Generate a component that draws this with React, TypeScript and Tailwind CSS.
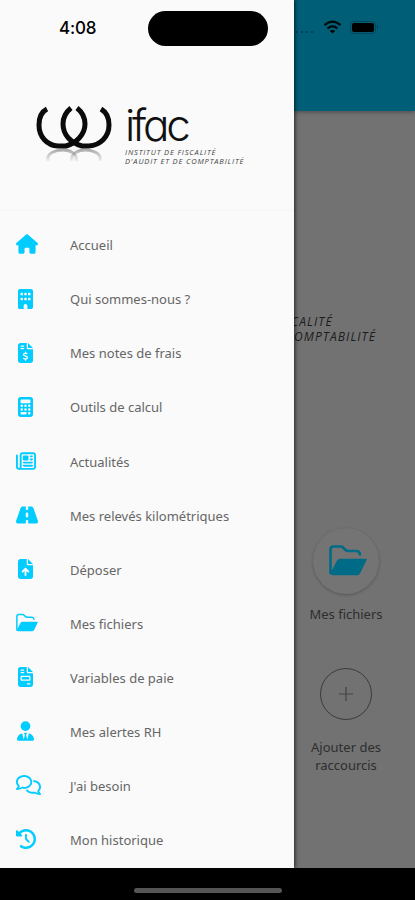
import type { ReactNode } from "react";
import type { IconType } from "react-icons";
import {
  FaBuilding,
  FaCalculator,
  FaClockRotateLeft,
  FaFileArrowUp,
  FaFileInvoice,
  FaFileInvoiceDollar,
  FaHouse,
  FaRegComments,
  FaRegNewspaper,
  FaRoad,
  FaUserTie,
} from "react-icons/fa6";

interface MenuEntry {
  label: string;
  Icon: IconType | typeof FolderIcon;
  size: string;
}

const MENU: MenuEntry[] = [
  { label: "Accueil", Icon: FaHouse, size: "w-[22px] h-[20px]" },
  { label: "Qui sommes-nous ?", Icon: FaBuilding, size: "ml-[2px] w-[15px] h-[20px]" },
  { label: "Mes notes de frais", Icon: FaFileInvoiceDollar, size: "ml-[2px] w-[15px] h-[20px]" },
  { label: "Outils de calcul", Icon: FaCalculator, size: "ml-[2px] w-[15px] h-[20px]" },
  { label: "Actualités", Icon: FaRegNewspaper, size: "w-[20px] h-[20px]" },
  { label: "Mes relevés kilométriques", Icon: FaRoad, size: "w-[22px] h-[20px]" },
  { label: "Déposer", Icon: FaFileArrowUp, size: "ml-[2px] w-[15px] h-[20px]" },
  { label: "Mes fichiers", Icon: FolderIcon, size: "w-[22px] h-[20px]" },
  { label: "Variables de paie", Icon: FaFileInvoice, size: "ml-[2px] w-[15px] h-[20px]" },
  { label: "Mes alertes RH", Icon: FaUserTie, size: "ml-[1px] w-[17px] h-[20px]" },
  { label: "J'ai besoin", Icon: FaRegComments, size: "w-[25px] h-[20px]" },
  { label: "Mon historique", Icon: FaClockRotateLeft, size: "w-[20px] h-[20px]" },
];

function FolderIcon({ className }: { className?: string }) {
  return (
    <svg viewBox="0 0 38 34" className={className} fill="none">
      <path
        d="M1.5 29V5.5q0-3 3-3h7q1.500 0 2.500 1l2.500 2.500q1 1 2.500 1h8.500q3 0 3.500 3.500"
        stroke="currentColor"
        strokeWidth="2.600"
        strokeLinecap="round"
      />
      <path
        d="M1.500 29 8 16.500q1-1.800 3-1.800h25.500q1.800 0 1 1.600L31.500 28.500q-1.300 2.800-4 2.800H4q-3 0-2.500-2.300Z"
        fill="currentColor"
      />
    </svg>
  );
}

function LogoMark() {
  return (
    <svg viewBox="0 0 76 60" className="h-[60px] w-[76px]" fill="none">
      <defs>
        <linearGradient id="fade" x1="0" y1="46" x2="0" y2="58" gradientUnits="userSpaceOnUse">
          <stop offset="0" stopColor="#777" stopOpacity="0.6" />
          <stop offset="1" stopColor="#999" stopOpacity="0.1" />
        </linearGradient>
      </defs>
      <g stroke="url(#fade)" strokeWidth="3">
        <path d="M12 57C10 49 20 46 27 46S42 50 40 57" />
        <path d="M36 57C34 50 42 46 49 46S66 49 64 57" />
      </g>
      <g stroke="#0b0b0b" strokeWidth="5">
        <path d="M11 5C5 8 3 14 3 21C3 33 11 41.500 22 42H30C40 39 49 31 49 20C49 13 46 8 41 4" />
        <path d="M35 4C30 8 27 13 27 20C27 31 35 39 46 42H53C64 41.500 73 33 73 21C73 14 70 8 65 5" />
      </g>
    </svg>
  );
}

function Drawer() {
  return (
    <aside className="relative z-10 flex h-[868px] w-[294px] shrink-0 flex-col overflow-hidden bg-[#fafafa] shadow-[1px_0_4px_rgba(0,0,0,0.7)]">
      <div className="flex h-[58px] items-center pl-[59px]">
        <span className="w-[89px] font-['Inter'] text-[17px] font-medium tracking-[-0.2px] text-black">
          4:08
        </span>
        <div className="h-[35px] w-[120px] rounded-full bg-black" />
      </div>
      <div className="flex h-[154px] items-start border-b border-[#f5f5f5] pl-[36px] pt-[46px]">
        <LogoMark />
        <div className="pl-[13px]">
          <div className="h-[44px] font-['Inter'] text-[44px] font-light leading-[43px] tracking-[-3.200px] text-[#111] [font-feature-settings:'cv11']">
            ifac
          </div>
          <div className="whitespace-nowrap font-['Open_Sans'] text-[7.500px] italic leading-[9px] tracking-[0.850px] text-[#444]">
            INSTITUT DE FISCALITÉ
            <br />
            D'AUDIT ET DE COMPTABILITÉ
          </div>
        </div>
      </div>
      <nav className="pt-[8px]">
        {MENU.map(({ label, Icon, size }) => (
          <div key={label} className="flex h-[54.100px] items-center pl-[16px]">
            <div className="flex w-[54px] pb-[3px] text-[#0cf]">
              <Icon className={size} />
            </div>
            <span className="whitespace-nowrap font-['Noto_Sans'] text-[13px] text-[#666]">
              {label}
            </span>
          </div>
        ))}
      </nav>
    </aside>
  );
}

function StatusIcons() {
  return (
    <div className="flex items-center pl-[2px] pt-[20px]">
      <div className="flex w-[27px] gap-[3px] pt-[9px]">
        {[0, 1, 2, 3].map((n) => (
          <i key={n} className="h-[2px] w-[2px] bg-[#004255]" />
        ))}
      </div>
      <svg viewBox="0 0 18 14" className="h-[14px] w-[19px]" fill="none" stroke="#00090c" strokeWidth="2.200">
        <path d="M1 5.200Q9-1.800 17 5.200M4 8.500Q9 4.200 14 8.500" />
        <path d="M9 13.500 6.300 10.900Q9 8.700 11.700 10.900Z" fill="#00090c" stroke="none" />
      </svg>
      <div className="ml-[8px] flex h-[13px] w-[26px] items-center justify-center rounded-[4px] border border-[#004658]">
        <div className="h-[9px] w-[22px] rounded-[2px] bg-black" />
      </div>
      <i className="ml-px h-[4px] w-[1px] bg-[#004658]" />
    </div>
  );
}

function Shortcut({ label, children }: { label: string; children: ReactNode }) {
  return (
    <div className="flex w-[104px] flex-col items-center">
      {children}
      <p className="w-[90px] text-center font-['Noto_Sans'] text-[13px] leading-[18px] text-[#2e2e2e]">
        {label}
      </p>
    </div>
  );
}

function DimmedPage() {
  return (
    <main className="flex h-[868px] flex-1 flex-col overflow-hidden bg-[#727272]">
      <header className="h-[111px] shrink-0 bg-[#005f77] shadow-[0_1px_4px_rgba(0,0,0,0.35)]">
        <StatusIcons />
      </header>
      <div className="flex h-[417px] shrink-0 justify-end pr-[39px] pt-[203px]">
        <div className="flex flex-col items-start whitespace-nowrap font-['Open_Sans'] text-[12px] italic leading-[15px] tracking-[1.100px] text-[#1c1c1c]">
          <span>INSTITUT DE FISCALITÉ</span>
          <span>D'AUDIT ET DE COMPTABILITÉ</span>
        </div>
      </div>
      <Shortcut label="Mes fichiers">
        <div className="mb-[11px] flex h-[66px] w-[66px] items-center justify-center rounded-full bg-[#747474] shadow-[0_1px_3px_rgba(0,0,0,0.25)]">
          <FolderIcon className="ml-[4px] h-[34px] w-[38px] text-[#006b87]" />
        </div>
      </Shortcut>
      <div className="pt-[45px]">
        <Shortcut label="Ajouter des raccourcis">
          <div className="mb-[18px] flex h-[52px] w-[52px] items-center justify-center rounded-full border border-[#3c3c3c]">
            <svg viewBox="0 0 14 14" className="h-[14px] w-[14px]" stroke="#444" strokeWidth="1.200">
              <path d="M7 0V14M0 7H14" />
            </svg>
          </div>
        </Shortcut>
      </div>
    </main>
  );
}

export default function App() {
  return (
    <div className="h-[900px] w-[415px] overflow-hidden bg-black">
      <div className="flex">
        <Drawer />
        <DimmedPage />
      </div>
      <div className="flex h-[32px] justify-center pt-[20px]">
        <div className="h-[5px] w-[148px] rounded-full bg-[#555]" />
      </div>
    </div>
  );
}
